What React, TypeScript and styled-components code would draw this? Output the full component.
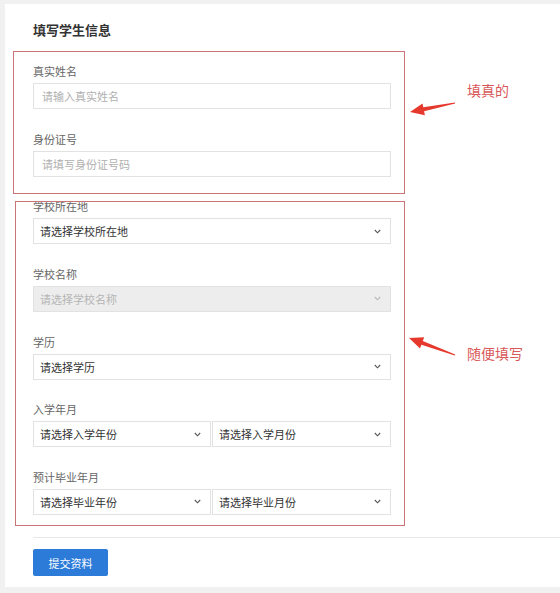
import styled, { createGlobalStyle } from "styled-components";

const Global = createGlobalStyle`
  html, body {
    margin: 0;
    padding: 0;
    background: #f1f1f1;
    font-family: "Noto Sans CJK SC", "Liberation Sans", sans-serif;
  }
`;

const Page = styled.div`
  position: relative;
  width: 560px;
  height: 593px;
  padding-top: 4px;
  box-sizing: border-box;
  overflow: hidden;
`;

const Card = styled.div`
  margin-left: 5px;
  height: 583px;
  background: #fff;
  padding: 17px 0 0 28px;
  box-sizing: border-box;
`;

const Title = styled.h2`
  margin: 0 0 24px;
  font-size: 13px;
  line-height: 18px;
  font-weight: 600;
  color: #333;
`;

const Field = styled.div`
  width: 358px;
  margin-bottom: 21.67px;
`;

const Label = styled.div`
  font-size: 11px;
  line-height: 16px;
  color: #666;
  margin-bottom: 4px;
`;

const Input = styled.div`
  height: 26px;
  box-sizing: border-box;
  border: 1px solid #e2e2e2;
  background: #fff;
  padding: 0 8px;
  display: flex;
  align-items: center;
  font-size: 11px;
  color: #b0b0b0;
`;

const Select = styled.div<{ $disabled?: boolean }>`
  height: 26px;
  box-sizing: border-box;
  border: 1px solid #e2e2e2;
  background: ${(p) => (p.$disabled ? "#ededed" : "#fff")};
  padding: 0 9px 0 6px;
  display: flex;
  align-items: center;
  justify-content: space-between;
  font-size: 11px;
  color: ${(p) => (p.$disabled ? "#b5b5b5" : "#333")};
`;

const Pair = styled.div`
  display: grid;
  grid-template-columns: 178px 179px;
  gap: 1px;
`;

const Divider = styled.div`
  height: 1px;
  background: #e8e8e8;
  margin: 1px 0 11px;
`;

const Button = styled.button`
  width: 75px;
  height: 27px;
  border: none;
  border-radius: 2px;
  background: #2c7bd9;
  color: #fff;
  font-family: inherit;
  font-size: 11px;
  padding: 0;
`;

const Overlay = styled.div`
  position: absolute;
  inset: 0;
  pointer-events: none;
`;

const MarkBox = styled.div<{ $x: number; $y: number; $w: number; $h: number }>`
  position: absolute;
  left: ${(p) => p.$x}px;
  top: ${(p) => p.$y}px;
  width: ${(p) => p.$w}px;
  height: ${(p) => p.$h}px;
  box-sizing: border-box;
  border: 1px solid #c97578;
`;

const Note = styled.div<{ $x: number; $y: number }>`
  position: absolute;
  left: ${(p) => p.$x}px;
  top: ${(p) => p.$y}px;
  font-size: 14px;
  line-height: 20px;
  color: #d9585a;
`;

const Chevron = ({ light }: { light?: boolean }) => (
  <svg width="7" height="5" viewBox="0 0 7 5">
    <polyline
      points="0.8,1 3.5,3.8 6.2,1"
      fill="none"
      stroke={light ? "#b8b8b8" : "#555"}
      strokeWidth="1.1"
    />
  </svg>
);

const Dropdown = ({ text, disabled }: { text: string; disabled?: boolean }) => (
  <Select $disabled={disabled}>
    <span>{text}</span>
    <Chevron light={disabled} />
  </Select>
);

export default function App() {
  return (
    <>
      <Global />
      <Page>
        <Card>
          <Title>填写学生信息</Title>
          <Field>
            <Label>真实姓名</Label>
            <Input>请输入真实姓名</Input>
          </Field>
          <Field>
            <Label>身份证号</Label>
            <Input>请填写身份证号码</Input>
          </Field>
          <Field>
            <Label>学校所在地</Label>
            <Dropdown text="请选择学校所在地" />
          </Field>
          <Field>
            <Label>学校名称</Label>
            <Dropdown text="请选择学校名称" disabled />
          </Field>
          <Field>
            <Label>学历</Label>
            <Dropdown text="请选择学历" />
          </Field>
          <Field>
            <Label>入学年月</Label>
            <Pair>
              <Dropdown text="请选择入学年份" />
              <Dropdown text="请选择入学月份" />
            </Pair>
          </Field>
          <Field>
            <Label>预计毕业年月</Label>
            <Pair>
              <Dropdown text="请选择毕业年份" />
              <Dropdown text="请选择毕业月份" />
            </Pair>
          </Field>
          <Divider />
          <Button>提交资料</Button>
        </Card>

        <Overlay>
          <MarkBox $x={13} $y={51} $w={392} $h={143} />
          <MarkBox $x={15} $y={201} $w={390} $h={325} />
          <Note $x={467} $y={80}>填真的</Note>
          <Note $x={467} $y={343}>随便填写</Note>
          <svg width="560" height="593" style={{ position: "absolute", left: 0, top: 0 }}>
            <polygon
              fill="#e6392e"
              points="410,112 424.9,115.2 424.1,111.3 455.1,103.5 454.9,102.5 423.3,107.3 422.5,103.4"
            />
            <polygon
              fill="#e6392e"
              points="409,338 420,348.5 421.4,344.8 454.8,355.5 455.2,354.5 422.8,341 424.2,337.3"
            />
          </svg>
        </Overlay>
      </Page>
    </>
  );
}
